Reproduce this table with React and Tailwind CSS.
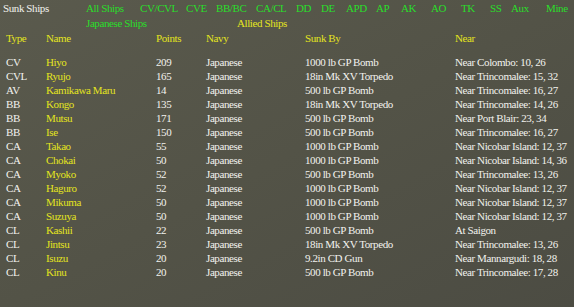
import React from "react";

const filters = [
  { label: "All Ships", w: "w-[54px]" },
  { label: "CV/CVL", w: "w-[46px]" },
  { label: "CVE", w: "w-[30px]" },
  { label: "BB/BC", w: "w-[40px]" },
  { label: "CA/CL", w: "w-[40px]" },
  { label: "DD", w: "w-[25px]" },
  { label: "DE", w: "w-[25px]" },
  { label: "APD", w: "w-[30px]" },
  { label: "AP", w: "w-[25px]" },
  { label: "AK", w: "w-[30px]" },
  { label: "AO", w: "w-[30px]" },
  { label: "TK", w: "w-[29px]" },
  { label: "SS", w: "w-[21px]" },
  { label: "Aux", w: "w-[35px]" },
  { label: "Mine", w: "w-[28px]" },
];

const ships = [
  ["CV", "Hiyo", "209", "1000 lb GP Bomb", "Near Colombo: 10, 26"],
  ["CVL", "Ryujo", "165", "18in Mk XV Torpedo", "Near Trincomalee: 15, 32"],
  ["AV", "Kamikawa Maru", "14", "500 lb GP Bomb", "Near Trincomalee: 16, 27"],
  ["BB", "Kongo", "135", "18in Mk XV Torpedo", "Near Trincomalee: 14, 26"],
  ["BB", "Mutsu", "171", "500 lb GP Bomb", "Near Port Blair: 23, 34"],
  ["BB", "Ise", "150", "500 lb GP Bomb", "Near Trincomalee: 16, 27"],
  ["CA", "Takao", "55", "1000 lb GP Bomb", "Near Nicobar Island: 12, 37"],
  ["CA", "Chokai", "50", "1000 lb GP Bomb", "Near Nicobar Island: 14, 36"],
  ["CA", "Myoko", "52", "500 lb GP Bomb", "Near Trincomalee: 13, 26"],
  ["CA", "Haguro", "52", "1000 lb GP Bomb", "Near Nicobar Island: 12, 37"],
  ["CA", "Mikuma", "50", "1000 lb GP Bomb", "Near Nicobar Island: 12, 37"],
  ["CA", "Suzuya", "50", "1000 lb GP Bomb", "Near Nicobar Island: 12, 37"],
  ["CL", "Kashii", "22", "500 lb GP Bomb", "At Saigon"],
  ["CL", "Jintsu", "23", "18in Mk XV Torpedo", "Near Trincomalee: 13, 26"],
  ["CL", "Isuzu", "20", "9.2in CD Gun", "Near Mannargudi: 18, 28"],
  ["CL", "Kinu", "20", "500 lb GP Bomb", "Near Trincomalee: 17, 28"],
];

const App = () => {
  return (
    <div className="w-[574px] h-[307px] overflow-hidden bg-gradient-to-br from-[#5a5a4d] via-[#535347] to-[#4c4c43] font-[family-name:Liberation_Serif,serif] text-[11px] leading-[14px] tracking-[-0.4px] text-[#f2f2ee] pl-[6px] pt-[1px]">
      <div className="flex h-[14px]">
        <div className="w-[80px] shrink-0 -ml-[3px] pr-[3px] box-content">Sunk Ships</div>
        <div className="flex text-[#2ade2a]">
          {filters.map((f) => (
            <div key={f.label} className={`${f.w} shrink-0 whitespace-nowrap`}>{f.label}</div>
          ))}
        </div>
      </div>
      <div className="flex h-[14px] mt-[1px]">
        <div className="w-[80px] shrink-0" />
        <div className="w-[151px] shrink-0 text-[#2ade2a]">Japanese Ships</div>
        <div className="text-[#e4e41e]">Allied Ships</div>
      </div>
      <div className="flex h-[14px] mt-[1px] text-[#e4e41e]">
        <div className="w-[40px] shrink-0">Type</div>
        <div className="w-[110px] shrink-0">Name</div>
        <div className="w-[50px] shrink-0">Points</div>
        <div className="w-[99px] shrink-0">Navy</div>
        <div className="w-[150px] shrink-0">Sunk By</div>
        <div>Near</div>
      </div>
      <div className="mt-[10px] flex flex-col">
        {ships.map((s) => (
          <div key={s[1]} className="flex h-[14px] whitespace-nowrap">
            <div className="w-[40px] shrink-0">{s[0]}</div>
            <div className="w-[110px] shrink-0 text-[#e4e41e]">{s[1]}</div>
            <div className="w-[50px] shrink-0">{s[2]}</div>
            <div className="w-[99px] shrink-0">Japanese</div>
            <div className="w-[150px] shrink-0">{s[3]}</div>
            <div>{s[4]}</div>
          </div>
        ))}
      </div>
    </div>
  );
};

export default App;
